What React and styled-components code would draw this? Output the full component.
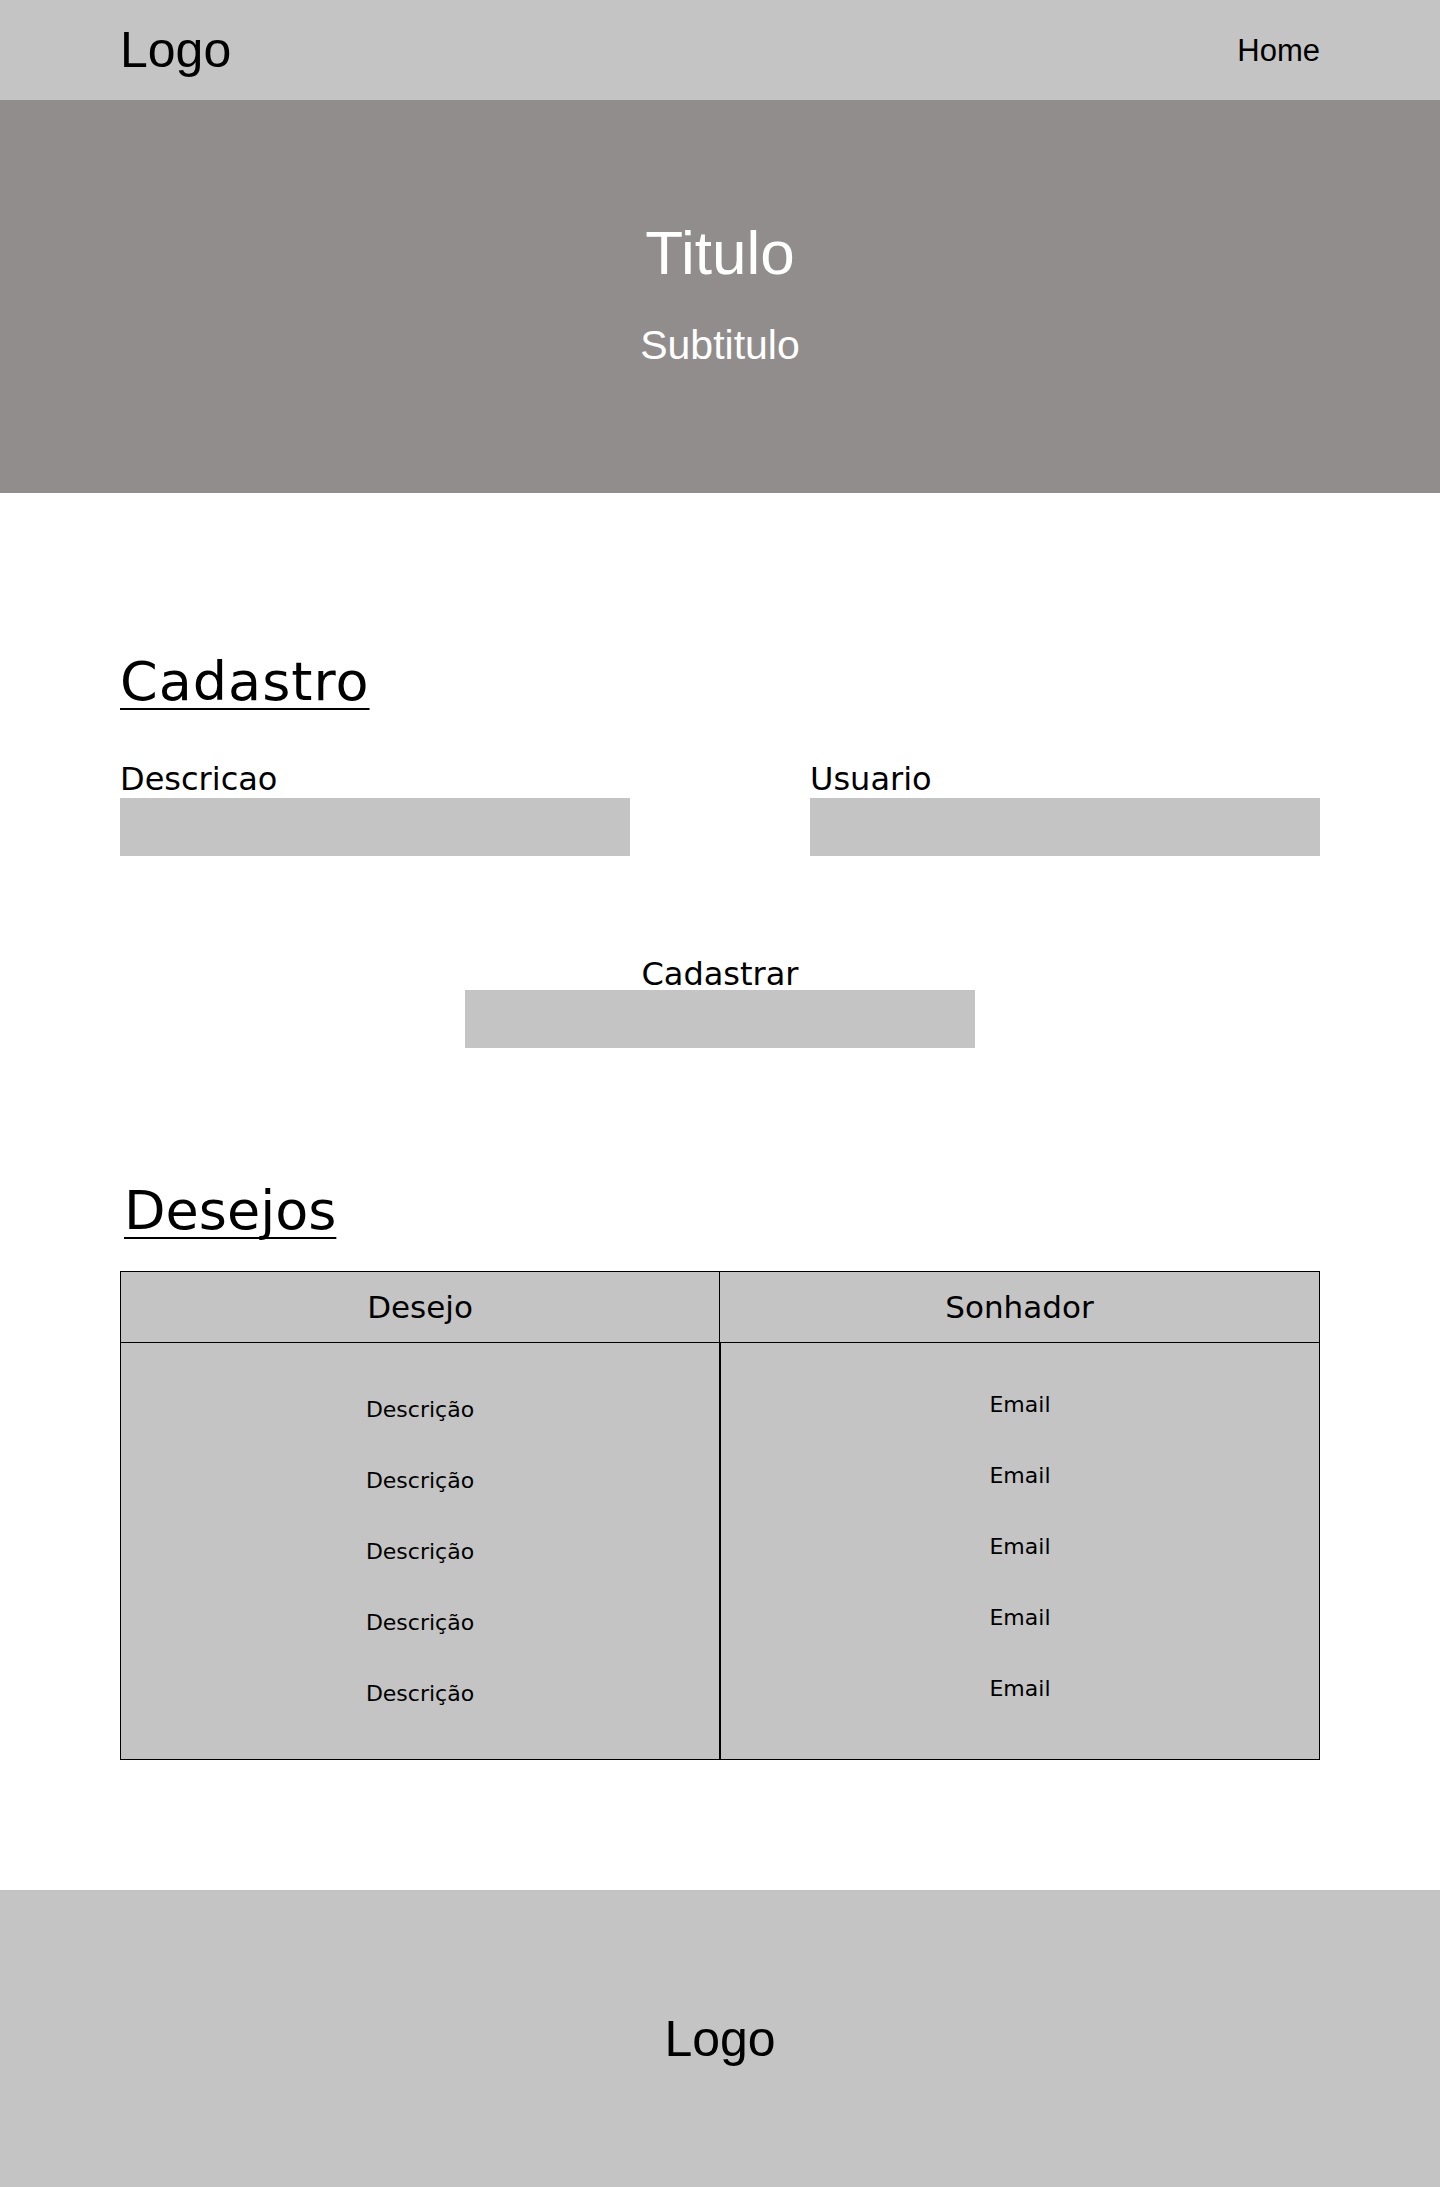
import React from "react";
import styled, { createGlobalStyle } from "styled-components";

const GlobalStyle = createGlobalStyle`
  body {
    margin: 0;
    background: #fff;
    color: #000;
    font-family: "Liberation Sans", Arial, sans-serif;
  }
`;

const Header = styled.header`
  height: 100px;
  padding: 0 120px;
  background-color: #c4c4c4;
  display: flex;
  align-items: center;
  justify-content: space-between;
`;

const HeaderLogo = styled.div`
  font-size: 50px;
  line-height: 1;
`;

const NavLink = styled.a`
  font-size: 31px;
  line-height: 1;
  color: #000;
  text-decoration: none;
`;

const Hero = styled.section`
  height: 393px;
  box-sizing: border-box;
  padding-top: 122px;
  background-color: #928d8d;
  color: #fff;
  display: flex;
  flex-direction: column;
  align-items: center;
  gap: 41px;
`;

const HeroTitle = styled.h1`
  margin: 0;
  font-size: 62px;
  font-weight: normal;
  line-height: 1;
`;

const HeroSubtitle = styled.h2`
  margin: 0;
  font-size: 41px;
  font-weight: normal;
  line-height: 1;
`;

const Main = styled.main`
  padding: 162px 120px 130px;
  font-family: "DejaVu Sans", sans-serif;
`;

const SectionTitle = styled.h2`
  margin: 0 0 0 ${(p) => p.$indent || 0}px;
  font-size: 54px;
  font-weight: normal;
  line-height: 1;
  letter-spacing: ${(p) => p.$spacing || 0}px;
  text-decoration: underline;
  text-decoration-thickness: 2px;
  text-underline-offset: 8px;
  text-decoration-skip-ink: none;
`;

const FieldRow = styled.div`
  margin-top: 51px;
  display: flex;
  justify-content: space-between;
`;

const Field = styled.div`
  width: 510px;
  display: flex;
  flex-direction: column;
  align-items: ${(p) => (p.$center ? "center" : "flex-start")};
`;

const Label = styled.label`
  font-size: 32px;
  line-height: normal;
`;

const Input = styled.input`
  width: 100%;
  height: 58px;
  box-sizing: border-box;
  margin: 0;
  border: none;
  background-color: #c4c4c4;
  outline: none;
`;

const ButtonRow = styled.div`
  margin-top: 99px;
  display: flex;
  justify-content: center;
`;

const SubmitBox = styled.button`
  width: 510px;
  height: 58px;
  margin-top: -3px;
  border: none;
  background-color: #c4c4c4;
  cursor: pointer;
`;

const WishesBlock = styled.div`
  margin-top: 136px;
`;

const Table = styled.div`
  margin-top: 33px;
  display: grid;
  grid-template-columns: 1fr 1fr;
`;

const HeadCell = styled.div`
  height: 72px;
  box-sizing: border-box;
  border: 1px solid #000;
  border-left: ${(p) => (p.$last ? "none" : "1px solid #000")};
  background-color: #c4c4c4;
  display: flex;
  align-items: center;
  justify-content: center;
  font-size: 31px;
`;

const BodyColumn = styled.div`
  height: 417px;
  box-sizing: border-box;
  border: 1px solid #000;
  border-top: none;
  background-color: #c4c4c4;
  padding-top: ${(p) => p.$top}px;
  display: flex;
  flex-direction: column;
  align-items: center;
`;

const Cell = styled.div`
  height: 71px;
  display: flex;
  align-items: center;
  font-size: 22px;
`;

const Footer = styled.footer`
  height: 298px;
  background-color: #c4c4c4;
  display: flex;
  align-items: center;
  justify-content: center;
`;

const FooterLogo = styled.div`
  font-size: 50px;
  line-height: 1;
`;

const wishes = [
  { desc: "Descrição", email: "Email" },
  { desc: "Descrição", email: "Email" },
  { desc: "Descrição", email: "Email" },
  { desc: "Descrição", email: "Email" },
  { desc: "Descrição", email: "Email" },
];

export default function App() {
  return (
    <>
      <GlobalStyle />
      <Header>
        <HeaderLogo>Logo</HeaderLogo>
        <NavLink href="#">Home</NavLink>
      </Header>

      <Hero>
        <HeroTitle>Titulo</HeroTitle>
        <HeroSubtitle>Subtitulo</HeroSubtitle>
      </Hero>

      <Main>
        <SectionTitle $spacing={1}>Cadastro</SectionTitle>
        <FieldRow>
          <Field>
            <Label htmlFor="descricao">Descricao</Label>
            <Input id="descricao" type="text" />
          </Field>
          <Field>
            <Label htmlFor="usuario">Usuario</Label>
            <Input id="usuario" type="text" />
          </Field>
        </FieldRow>
        <ButtonRow>
          <Field $center>
            <Label>Cadastrar</Label>
            <SubmitBox type="button" aria-label="Cadastrar" />
          </Field>
        </ButtonRow>

        <WishesBlock>
          <SectionTitle $indent={4}>Desejos</SectionTitle>
          <Table>
            <HeadCell>Desejo</HeadCell>
            <HeadCell $last>Sonhador</HeadCell>
            <BodyColumn $top={31}>
              {wishes.map((w, i) => (
                <Cell key={i}>{w.desc}</Cell>
              ))}
            </BodyColumn>
            <BodyColumn $top={26}>
              {wishes.map((w, i) => (
                <Cell key={i}>{w.email}</Cell>
              ))}
            </BodyColumn>
          </Table>
        </WishesBlock>
      </Main>

      <Footer>
        <FooterLogo>Logo</FooterLogo>
      </Footer>
    </>
  );
}
